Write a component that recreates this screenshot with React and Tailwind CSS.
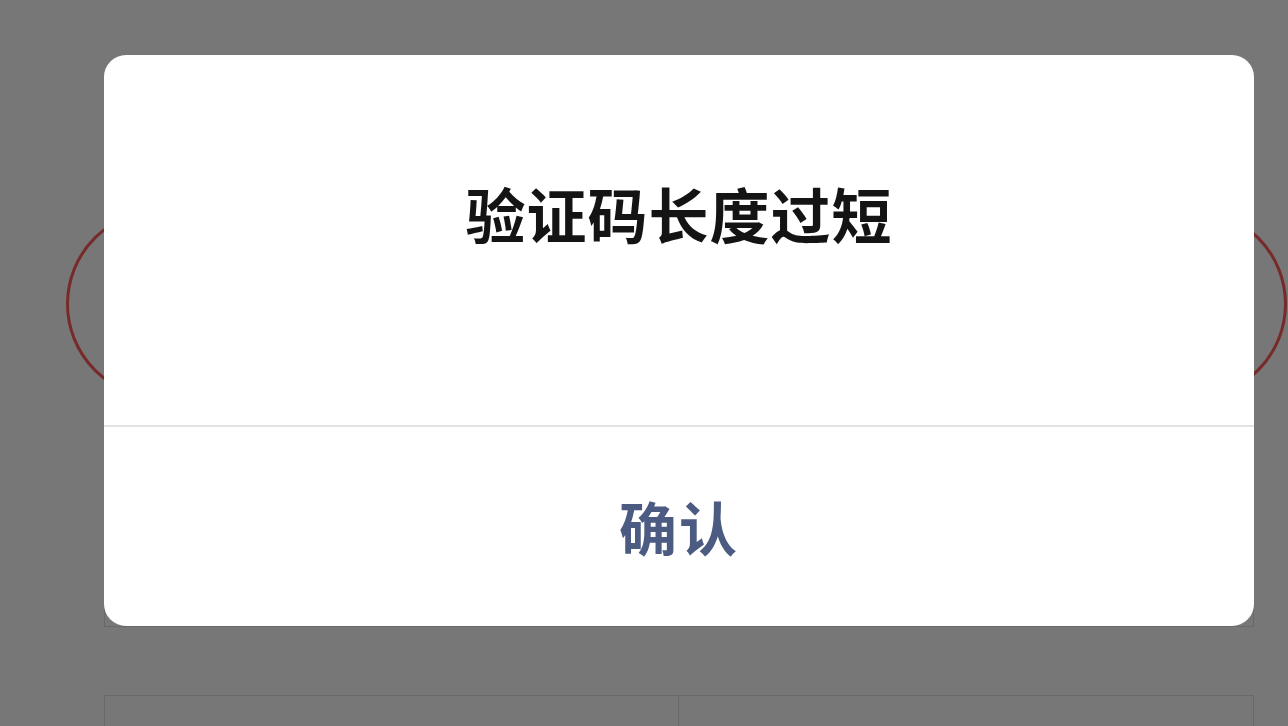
import React from "react";

export default function App() {
  return (
    <div className="relative w-[1288px] h-[726px] overflow-hidden bg-white" style={{ fontFamily: '"Noto Sans CJK SC", "Noto Sans", sans-serif' }}>
      {/* background page */}
      <div className="flex flex-col pt-[90px]">
        <div className="relative ml-[104px] mr-[34px] h-[537px] border border-[#e1e1e1]">
          <div className="absolute left-[-39px] top-[118px] w-[190px] h-[190px] rounded-full border-[3px] border-[#ff5a5a]" />
          <div className="absolute right-[-34px] top-[118px] w-[190px] h-[190px] rounded-full border-[3px] border-[#ff5a5a]" />
        </div>
        <div className="ml-[104px] mr-[34px] mt-[68px] grid grid-cols-2 h-[60px] border border-[#e1e1e1]">
          <div className="border-r border-[#e1e1e1]" />
          <div />
        </div>
      </div>

      {/* overlay */}
      <div className="absolute inset-0 bg-black/[0.535] pl-[104px] pt-[55px]">
        <div className="w-[1150px] h-[571px] bg-white rounded-[22px] flex flex-col overflow-hidden">
          <div className="h-[370px] flex justify-center pt-[128px]">
            <span className="text-[60px] leading-none font-bold text-[#141414] tracking-[1px]">验证码长度过短</span>
          </div>
          <div className="h-[2px] bg-[#e2e2e2]" />
          <div className="flex-1 flex items-center justify-center pb-[2px]">
            <span className="text-[58px] leading-none font-bold text-[#4b5b81] tracking-[2px]">确认</span>
          </div>
        </div>
      </div>
    </div>
  );
}
